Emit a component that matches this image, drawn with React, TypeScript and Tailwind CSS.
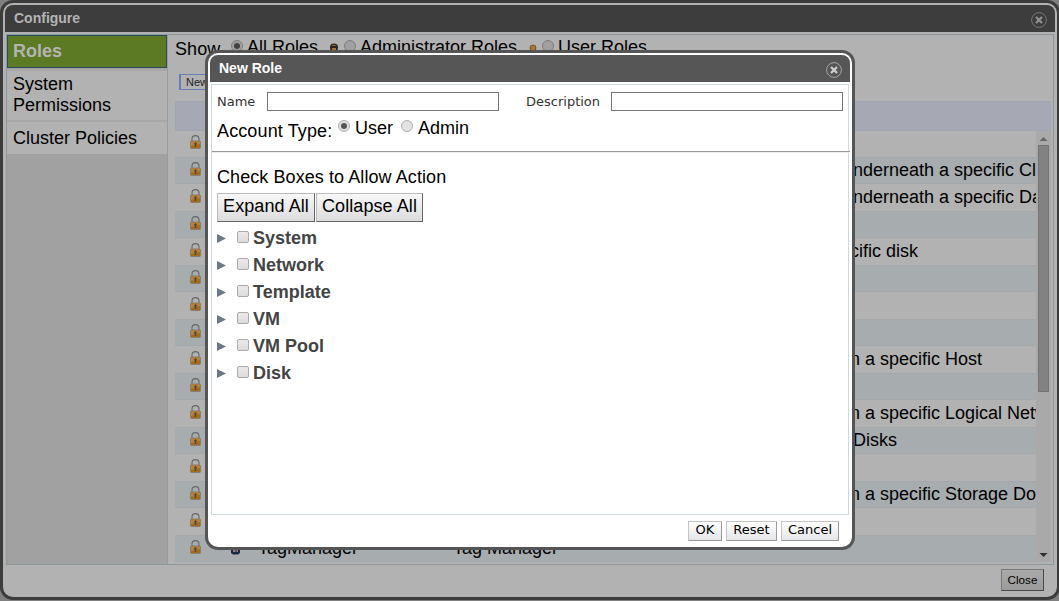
import React from "react";

const rows = [
  { text: "", pad: "" },
  { text: "underneath a specific Cluster", pad: "pl-[657px]" },
  { text: "underneath a specific Data Center", pad: "pl-[657px]" },
  { text: "", pad: "" },
  { text: "specific disk", pad: "pl-[635px]" },
  { text: "", pad: "" },
  { text: "", pad: "" },
  { text: "", pad: "" },
  { text: "on a specific Host", pad: "pl-[654px]" },
  { text: "", pad: "" },
  { text: "on a specific Logical Network", pad: "pl-[654px]" },
  { text: "Disks", pad: "pl-[667px]" },
  { text: "", pad: "" },
  { text: "on a specific Storage Domain", pad: "pl-[654px]" },
  { text: "", pad: "" },
];

const groups = ["System", "Network", "Template", "VM", "VM Pool", "Disk"];

function Lock() {
  return (
    <svg className="block shrink-0" width="11" height="14" viewBox="0 0 11 14">
      <path d="M2 6V4C2 1.800 3.500.6 5.500.6S9 1.800 9 4v2" fill="none" stroke="#666" strokeWidth="1.100" />
      <rect x=".5" y="6" width="10" height="7.500" rx="1" fill="#a56b15" stroke="#827e78" />
      <path d="M1 6.500h9v2.500l-9 2z" fill="#b98334" />
      <path d="M5.500 7l2 2.200H6.200V12H4.800V9.200H3.500z" fill="#4b4844" />
    </svg>
  );
}

function CloseIcon({ dim }: { dim?: boolean }) {
  const c = dim ? "#777" : "#a5a5a5";
  const x = dim ? "#929292" : "#d0d0d0";
  return (
    <svg className="block shrink-0" width="16" height="16" viewBox="0 0 16 16">
      <circle cx="8" cy="8" r="7.400" fill="none" stroke={c} strokeWidth="1" />
      <path d="M5 5l6 6M11 5l-6 6" stroke={x} strokeWidth="2.200" />
    </svg>
  );
}

function Radio({ on, dim }: { on?: boolean; dim?: boolean }) {
  return (
    <svg className="block shrink-0" width="12" height="12" viewBox="0 0 12 12">
      <circle cx="6" cy="6" r="5.500" fill={dim ? "#a0a0a0" : "#e2e2e2"} stroke={dim ? "#7c7c7c" : "#adadad"} />
      {on && <circle cx="6" cy="6" r="3" fill={dim ? "#424242" : "#555"} />}
    </svg>
  );
}

function ConfigureWindow() {
  return (
    <div className="w-[1060px] h-[600px] shrink-0 border-[3px] border-[#3c3c3c] rounded-[13px] bg-[#b2b2b2] p-[2px] flex flex-col overflow-hidden">
      <header className="h-[27px] shrink-0 bg-[#3d3d3d] rounded-t-[8px] flex items-center justify-between pl-[9px] pr-2">
        <h1 className="text-sm font-bold text-[#b4b4b4] pb-[2px]">Configure</h1>
        <div className="pt-[3px]"><CloseIcon dim /></div>
      </header>
      <main className="mt-[2px] ml-[1px] w-[1048px] h-[531px] shrink-0 border border-[#8e979b] flex">
        <nav className="w-[160px] shrink-0 bg-[#a1a1a1] leading-[21px]">
          <div className="h-[33px] border border-[#284b5e] bg-[#5b7a23] text-[#b4b4b4] font-bold pl-[5px] pt-[5px]">Roles</div>
          <div className="h-[53px] border-y-2 border-[#a8a8a8] bg-[#b2b2b2] pl-[6px] pt-[3px] mt-px">System Permissions</div>
          <div className="h-[32px] bg-[#b2b2b2] pl-[6px] pt-[6px]">Cluster Policies</div>
        </nav>
        <section className="w-[886px] shrink-0 border-l border-[#989c9e] pl-[7px] overflow-hidden">
          <div className="h-[39px] flex leading-[20px] whitespace-nowrap">
            <span className="w-[56px] pt-[4px] tracking-[0.100px]">Show</span>
            <span className="pt-[5px]"><Radio on dim /></span>
            <span className="w-[83px] pl-[4px] pt-[2px]">All Roles</span>
            <span className="w-[18px] pt-[8px] pl-[3px]">
              <svg className="block" width="10" height="9" viewBox="0 0 10 9">
                <circle cx="5" cy="4.500" r="4" fill="#30251b" />
                <path d="M2.500 2.800Q5 .8 7.500 2.800zM3 5h4v2H3z" fill="#a87731" />
              </svg>
            </span>
            <span className="pt-[5px]"><Radio dim /></span>
            <span className="w-[171px] pl-[4px] pt-[2px]">Administrator Roles</span>
            <span className="w-[15px] pt-[7px] pl-px">
              <svg className="block" width="10" height="10" viewBox="0 0 10 10">
                <circle cx="5" cy="6" r="3" fill="#a87a38" stroke="#76501e" />
              </svg>
            </span>
            <span className="pt-[5px]"><Radio dim /></span>
            <span className="pl-[4px] pt-[2px]">User Roles</span>
          </div>
          <div className="h-[27px] pl-1">
            <div className="w-[48px] h-[16px] border border-l-2 border-[#6680b1] text-[11px] leading-[14px] pl-[5px] text-[#222]">New</div>
          </div>
          <div className="w-[876px] h-[30px] bg-[#a6a9b3] border border-[#9ba7b4]" />
          <div className="w-[876px] h-[431px] flex">
            <div className="w-[861px] overflow-hidden">
              {rows.map((r, i) => (
                <div key={i} className={`flex overflow-hidden whitespace-nowrap leading-[21px] first:h-[26px] h-[27px] ${i % 2 ? "bg-[#a7acaf] border-y border-[#a4a8aa]" : ""}`}>
                  <div className={`w-0 shrink-0 ml-[15px] ${i % 2 || i === 0 ? "pt-[4px]" : "pt-[5px]"}`}><Lock /></div>
                  <div className="w-[846px] shrink-0 -ml-[4px]">
                    <div className={`${r.pad} ${i % 2 ? "pt-[2px]" : "pt-[3px]"}`}>{r.text}</div>
                  </div>
                </div>
              ))}
              <div className="h-[27px] flex bg-[#a7acaf] border-y border-[#a4a8aa] leading-[21px] whitespace-nowrap">
                <div className="w-[55px] pl-[15px] pt-[4px] shrink-0"><Lock /></div>
                <div className="w-[28px] pt-[7px] shrink-0">
                  <svg className="block" width="11" height="12" viewBox="0 0 11 12">
                    <path d="M1 1h9v9L8 11.500H3L1 10z" fill="#182b46" />
                    <path d="M3 2h5v7H3z" fill="#718ca5" />
                    <path d="M5 2h2v7H5z" fill="#9e402b" />
                  </svg>
                </div>
                <div className="w-[195px] pt-[2px] shrink-0">TagManager</div>
                <div className="pt-[2px]">Tag Manager</div>
              </div>
            </div>
            <div className="w-[15px] bg-[#a9a9a9] flex flex-col items-center">
              <svg width="15" height="14" viewBox="0 0 15 14"><path d="M3.500 10L7.500 6l4 4z" fill="#686868" /></svg>
              <div className="w-[11px] h-[247px] bg-[#828282] border border-[#747474]" />
              <div className="grow" />
              <svg width="15" height="14" viewBox="0 0 15 14"><path d="M3.500 5h8l-4 4z" fill="#303030" /></svg>
            </div>
          </div>
        </section>
      </main>
      <footer className="grow flex justify-end pr-[11px] pt-[4px]">
        <button className="w-[43px] h-[22px] border border-[#777] border-r-[#494949] border-b-[#494949] bg-gradient-to-b from-[#aaa] to-[#9b9b9b] text-[11.700px] leading-[20px]">Close</button>
      </footer>
    </div>
  );
}

function NewRoleDialog() {
  return (
    <div className="absolute left-[205px] top-[50px] w-[650px] h-[500px] border-[3px] border-[#555] rounded-[13px] bg-white p-[2px] flex flex-col overflow-hidden">
      <header className="h-[27px] shrink-0 bg-[#565656] rounded-t-[8px] flex items-center justify-between pl-[9px] pr-2">
        <h2 className="text-sm font-bold text-white pb-[2px]">New Role</h2>
        <div className="pt-[3px]"><CloseIcon /></div>
      </header>
      <main className="w-[638px] h-[431px] ml-px mt-[2px] shrink-0 border border-[#ced9de]">
        <div className="h-[33px] pt-[7px] flex text-[13px] text-[#333] leading-[19px] font-['DejaVu_Sans']">
          <label className="w-[55px] pl-[5px]">Name</label>
          <input className="w-[232px] h-[19px] border border-[#777] bg-white" />
          <label className="w-[112px] pl-[27px]">Description</label>
          <input className="w-[232px] h-[19px] border border-[#777] bg-white" />
        </div>
        <div className="h-[33px] flex leading-[21px] pl-[5px] whitespace-nowrap">
          <span className="w-[121px] pt-[3px] tracking-[0.120px]">Account Type:</span>
          <span className="pt-[2px]"><Radio on /></span>
          <span className="w-[51px] pl-[5px]">User</span>
          <span className="pt-[2px]"><Radio /></span>
          <span className="pl-[5px]">Admin</span>
        </div>
        <div className="w-[638px] h-[2px] border-t border-[#999] border-b border-b-[#eee]" />
        <div className="pt-[14px] pl-[5px] leading-[21px]">
          <p className="tracking-[0.080px]">Check Boxes to Allow Action</p>
          <div className="flex gap-px mt-[5px] mb-[3px] tracking-[0.080px]">
            <button className="w-[98px] h-[29px] pb-[2px] border border-[#bbb] border-r-[#666] border-b-[#666] bg-gradient-to-b from-[#f8f8f8] to-[#dcdcdc]">Expand All</button>
            <button className="w-[107px] h-[29px] pb-[2px] border border-[#bbb] border-r-[#666] border-b-[#666] bg-gradient-to-b from-[#f8f8f8] to-[#dcdcdc]">Collapse All</button>
          </div>
          {groups.map((g) => (
            <div key={g} className="h-[27px] flex text-[#444] font-bold">
              <svg className="block mt-[9px]" width="20" height="9" viewBox="0 0 20 9"><path d="M0 0l9 4.500L0 9z" fill="#6c7888" /></svg>
              <span className="w-[12px] h-[12px] mt-[6px] mr-[4px] border border-[#aaa] rounded-[2px] bg-gradient-to-b from-[#eaeaea] to-[#dcdcdc]" />
              <span className="pt-[3px]">{g}</span>
            </div>
          ))}
        </div>
      </main>
      <footer className="flex justify-end gap-1 pr-[11px] pt-[6px] text-[13px] leading-[16px] font-['DejaVu_Sans']">
        {[["OK", "w-[34px]"], ["Reset", "w-[51px]"], ["Cancel", "w-[58px]"]].map(([label, w]) => (
          <button key={label} className={`${w} h-[20px] border border-[#c4c4c4] border-r-[#999] border-b-[#999] rounded-[1px] bg-gradient-to-b from-white to-[#e4e5e8] pb-[3px]`}>{label}</button>
        ))}
      </footer>
    </div>
  );
}

export default function App() {
  return (
    <div className="relative w-[1059px] h-[601px] overflow-hidden bg-[#808080] flex text-[18px] text-black font-['Liberation_Sans',sans-serif]">
      <ConfigureWindow />
      <NewRoleDialog />
    </div>
  );
}
